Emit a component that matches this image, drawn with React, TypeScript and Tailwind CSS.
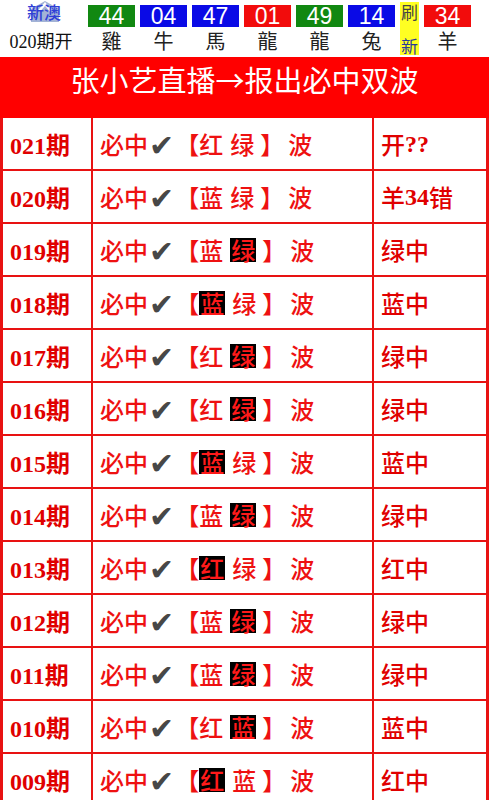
import React from "react";

type Row = {
  qi: string;
  a: string;
  b: string;
  hl: "a" | "b" | null;
  res: string;
};

const rows: Row[] = [
  { qi: "021期", a: "红", b: "绿", hl: null, res: "开??" },
  { qi: "020期", a: "蓝", b: "绿", hl: null, res: "羊34错" },
  { qi: "019期", a: "蓝", b: "绿", hl: "b", res: "绿中" },
  { qi: "018期", a: "蓝", b: "绿", hl: "a", res: "蓝中" },
  { qi: "017期", a: "红", b: "绿", hl: "b", res: "绿中" },
  { qi: "016期", a: "红", b: "绿", hl: "b", res: "绿中" },
  { qi: "015期", a: "蓝", b: "绿", hl: "a", res: "蓝中" },
  { qi: "014期", a: "蓝", b: "绿", hl: "b", res: "绿中" },
  { qi: "013期", a: "红", b: "绿", hl: "a", res: "红中" },
  { qi: "012期", a: "蓝", b: "绿", hl: "b", res: "绿中" },
  { qi: "011期", a: "蓝", b: "绿", hl: "b", res: "绿中" },
  { qi: "010期", a: "红", b: "蓝", hl: "b", res: "蓝中" },
  { qi: "009期", a: "红", b: "蓝", hl: "a", res: "红中" },
];

const balls = [
  { n: "44", z: "雞", c: "bg-[#118811]" },
  { n: "04", z: "牛", c: "bg-[#0a0ae6]" },
  { n: "47", z: "馬", c: "bg-[#0a0ae6]" },
  { n: "01", z: "龍", c: "bg-[#f20c0c]" },
  { n: "49", z: "龍", c: "bg-[#118811]" },
  { n: "14", z: "兔", c: "bg-[#0a0ae6]" },
];

const sans = "font-['Noto_Sans_CJK_SC','Noto_Sans',sans-serif]";
const serif = "font-['Liberation_Serif','Noto_Sans_CJK_SC',serif]";

const Ball = ({ n, z, c }: { n: string; z: string; c: string }) => (
  <div className="flex flex-col items-center w-[47px]">
    <div className={`${c} w-full h-[22px] flex items-center justify-center text-white text-[23px] leading-none font-['Liberation_Sans',sans-serif]`}>
      {n}
    </div>
    <div className={`${sans} text-[20px] leading-[20px] mt-[4px] text-[#222]`}>{z}</div>
  </div>
);

const Hl = ({ ch, on }: { ch: string; on: boolean }) =>
  on ? <span className="bg-black text-[#ff1a1a] px-[1px]">{ch}</span> : <span>{ch}</span>;

// digits and question marks are bold serif, the hanzi a medium sans
const Result = ({ text }: { text: string }) => (
  <>
    {text.split(/([0-9?]+)/).filter(Boolean).map((p, i) =>
      /[0-9?]/.test(p) ? (
        <span key={i} className="font-bold">{p}</span>
      ) : (
        <span key={i} className={`${sans} font-medium`}>{p}</span>
      )
    )}
  </>
);

const App = () => {
  return (
    <div className="w-[489px] bg-white overflow-hidden">
      {/* top draw result bar */}
      <div className="h-[57px] flex">
        <div className="w-[88px] flex flex-col items-center pt-[1px]">
          <div className="relative h-[22px] w-[40px] flex justify-center">
            <svg className="absolute left-[7px] top-0" width="28" height="21" viewBox="0 0 28 21">
              <path d="M0 21 L0 8 L14 0 L28 8 L28 21 Z" fill="#a3b3d6" />
              <path d="M8 10 L14 3 L20 10" stroke="#fff" strokeWidth="2.5" fill="none" />
            </svg>
            <span className={`relative ${sans} font-medium text-[17px] leading-[21px] text-[#2f3fd6]`}>新澳</span>
          </div>
          <div className={`${serif} text-[18px] leading-none mt-[10px] text-[#111] ml-[-6px]`}>020期开</div>
        </div>
        <div className="flex gap-[5px] pt-[5px]">
          {balls.map((b, i) => (
            <Ball key={i} {...b} />
          ))}
        </div>
        <div className={`ml-[5px] mt-[2px] w-[19px] h-[53px] bg-[#ffff22] flex flex-col items-center justify-between py-[1px] ${sans} text-[17px] leading-none`}>
          <span className="text-[#444]">刷</span>
          <span className="text-[#2a3a9a]">新</span>
        </div>
        <div className="ml-[5px] pt-[5px]">
          <Ball n="34" z="羊" c="bg-[#f20c0c]" />
        </div>
      </div>

      {/* heading */}
      <div className="bg-[#ff0000] h-[61px] flex justify-center pt-[2px]">
        <span className={`${sans} text-white text-[29px] leading-[40px]`}>张小艺直播→报出必中双波</span>
      </div>

      {/* table */}
      <div className="border-x-[3px] border-[#e81212]">
        {rows.map((r) => (
          <div key={r.qi} className="grid grid-cols-[90px_281px_1fr] h-[53px] border-b-2 border-[#e81212]">
            <div className={`border-r-2 border-[#e81212] flex items-center pl-[7px] pt-[4px] leading-none ${serif} font-bold text-[24px] text-[#e00000]`}>
              {r.qi}
            </div>
            <div className={`border-r-2 border-[#e81212] flex items-center pl-[7px] leading-none ${sans} font-medium text-[24px] text-[#ee1111] whitespace-pre`}>
              <span>必中</span>
              <span className="text-[#474747] text-[30px] font-['DejaVu_Sans',sans-serif] mt-[4px] ml-[1px] mr-[1px]">✔</span>
              <span>【</span>
              <Hl ch={r.a} on={r.hl === "a"} />
              <span className="w-[7px]" />
              <Hl ch={r.b} on={r.hl === "b"} />
              <span className="w-[6px]" />
              <span>】</span>
              <span className="w-[4px]" />
              <span>波</span>
            </div>
            <div className={`flex items-center pl-[7px] leading-none ${serif} text-[24px] text-[#e00000]`}>
              <Result text={r.res} />
            </div>
          </div>
        ))}
      </div>
    </div>
  );
};

export default App;
